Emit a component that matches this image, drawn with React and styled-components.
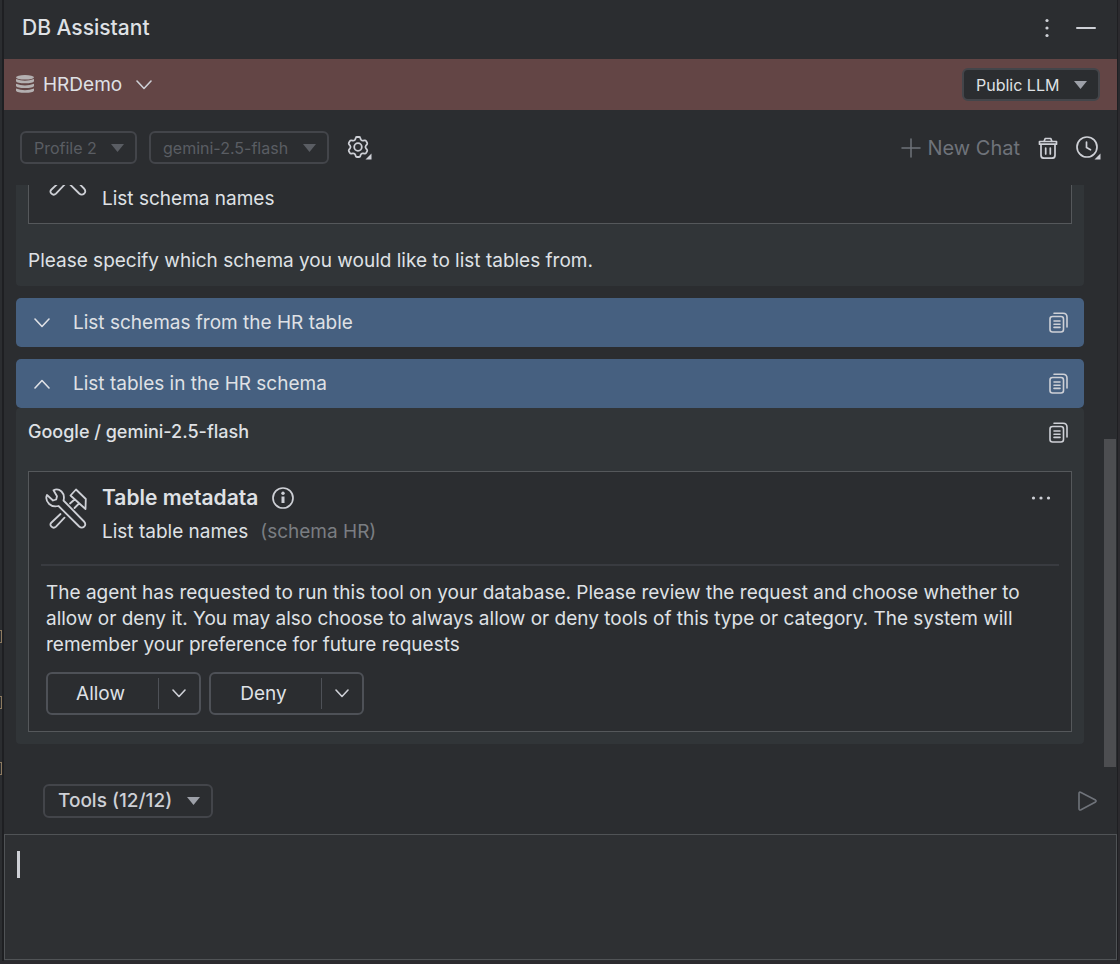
import React, { useState } from 'react';
import styled, { createGlobalStyle, css } from 'styled-components';

const GlobalStyle = createGlobalStyle`
  * {
    box-sizing: border-box;
  }
  body {
    margin: 0;
    background: #1e1f22;
    color: #dfe1e5;
    font-family: Inter, sans-serif;
    font-size: 19px;
    line-height: 26px;
  }
  button, select, textarea {
    font: inherit;
    color: inherit;
  }
`;

const Frame = styled.div`
  display: flex;
  min-height: 100vh;
  border-bottom: 3px solid #2b2a2e;
`;

const EditorEdge = styled.div`
  display: flex;
  flex-direction: column;
  justify-content: flex-end;
  gap: 53px;
  width: 2px;
  margin-right: 2px;
  padding-bottom: 186px;
  background: #2b2d30;
`;

const EdgeMark = styled.i`
  height: 13px;
  border: 1px solid #8c7a60;
  border-left: 0;
`;

const Panel = styled.main`
  display: flex;
  flex-direction: column;
  flex: 1;
  min-width: 0;
  margin-right: 1px;
  background: #2b2d30;
`;

const RightEdge = styled.div`
  width: 2px;
  background: #2b2a2e;
`;

const Row = styled.div`
  display: flex;
  align-items: center;
`;

const TitleBar = styled(Row)`
  justify-content: space-between;
  height: 59px;
  padding: 0 21px 3px 18px;
`;

const PanelTitle = styled.h1`
  margin: 0;
  font-size: 21px;
  font-weight: 500;
`;

const ConnectionBar = styled(Row)`
  justify-content: space-between;
  height: 51px;
  padding: 0 17px 0 12px;
  background: #634545;
`;

const Toolbar = styled(Row)`
  justify-content: space-between;
  height: 75px;
  padding: 0 16px;
`;

const Group = styled(Row)`
  gap: ${props => props.$gap || 12}px;
`;

const IconButton = styled.button`
  display: flex;
  align-items: center;
  gap: 4px;
  padding: 0;
  border: 0;
  background: none;
  color: ${props => props.$muted ? '#6f737a' : '#ced0d6'};
`;

const NewChatButton = styled(IconButton)`
  gap: 6px;
  font-size: 20px;
`;

const SelectBox = styled.label`
  position: relative;
  display: flex;
  align-items: center;

  svg {
    position: absolute;
    right: ${props => props.$plain ? '0' : '13px'};
    color: ${props => props.$disabled ? '#5a5d63' : props.$plain ? '#ced0d6' : '#9da0a8'};
    pointer-events: none;
  }
`;

const SelectField = styled.select`
  appearance: none;
  height: 33px;
  padding: 0 38px 0 12px;
  border: 2px solid #43454a;
  border-radius: 6px;
  background: #2b2d30;
  font-size: 16px;
  line-height: 24px;

  &:disabled {
    color: #5a5d63;
    opacity: 1;
  }
  ${props => props.$strong && css`
    height: 34px;
    padding-left: 13px;
    font-size: 19px;
    font-weight: 500;
    color: #ced0d6;
  `}
  ${props => props.$plain && css`
    padding: 0 29px 0 0;
    border: 0;
    background: none;
    font-size: 19px;
  `}
`;

const ChatView = styled.div`
  display: flex;
  flex: 1;
  min-height: 0;
`;

const ChatList = styled.div`
  display: flex;
  flex-direction: column;
  justify-content: flex-end;
  flex: 1;
  min-width: 0;
  height: 582px;
  padding: 0 20px 23px 12px;
  overflow: hidden;
`;

const ScrollTrack = styled.div`
  display: flex;
  align-items: flex-end;
  width: 12px;
  margin-right: 1px;
`;

const ScrollThumb = styled.div`
  width: 100%;
  height: 328px;
  background: #4d4e51;
`;

const Answer = styled.section`
  padding: 0 12px 12px;
  border-radius: 4px;
  background: #313538;
`;

const AnswerHead = styled(Row)`
  justify-content: space-between;
  height: 63px;
  padding: 0 4px 15px 0;
  font-size: 18px;
  font-weight: 500;
`;

const AnswerText = styled.p`
  margin: 0;
  padding-top: 24px;
`;

const Prompt = styled(Row)`
  justify-content: space-between;
  height: 49px;
  margin-top: 12px;
  padding: 0 16px 0 18px;
  border-radius: 5px;
  background: #466080;
  flex-shrink: 0;
`;

const PromptToggle = styled(IconButton)`
  flex: 1;
  gap: 23px;
  color: #dfe1e5;
`;

const ToolCard = styled.article`
  border: 1px solid #55585b;
  background: #2b2d30;
`;

const ToolHead = styled(Row)`
  align-items: flex-start;
  gap: 15px;
  margin: 0 12px;
  padding: 12px 8px ${props => props.$compact ? '11px' : '19px'} 4px;

  > button, > span {
    margin-top: 4px;
  }
`;

const ToolNames = styled.div`
  flex: 1;
`;

const ToolTitle = styled.h2`
  display: flex;
  align-items: center;
  gap: 14px;
  height: 28px;
  margin: 0 0 7px;
  font-size: 21px;
  font-weight: 600;
`;

const ToolArgs = styled.span`
  margin-left: 12px;
  color: #7a7d82;
`;

const ToolBody = styled.div`
  margin: 0 12px;
  padding: 14px 5px 16px;
  border-top: 2px solid #393b40;

  p {
    margin: 0 0 14px;
  }
`;

const SplitButton = styled.div`
  display: flex;
  align-items: center;
  height: 43px;
  border: 2px solid #4e5157;
  border-radius: 6px;

  button {
    height: 31px;
    border: 0;
    background: none;
  }
`;

const SplitMain = styled.button`
  width: 111px;
  padding: 0 6px 0 0;
`;

const SplitMore = styled.button`
  display: flex;
  align-items: center;
  justify-content: center;
  width: 40px;
  padding: 0;
  box-shadow: -1px 0 #4e5157;
  color: #ced0d6;
`;

const Composer = styled(Row)`
  justify-content: space-between;
  height: 67px;
  padding: 0 20px 0 39px;
`;

const InputWrap = styled.div`
  position: relative;
  display: flex;
  height: 126px;
  margin-bottom: 1px;
`;

const PromptInput = styled.textarea`
  flex: 1;
  padding: 16px;
  border: 1px solid #505356;
  outline: 0;
  resize: none;
  background: #2e3033;
`;

const Caret = styled.span`
  position: absolute;
  top: 17px;
  left: 13px;
  width: 3px;
  height: 27px;
  background: #ced0d6;
`;

const Icon = ({ w = 24, h = w, sw = 2, children }) => (
  <svg width={w} height={h} viewBox={`0 0 ${w} ${h}`} fill="none" stroke="currentColor" strokeWidth={sw} strokeLinecap="round" strokeLinejoin="round" aria-hidden="true">
    {children}
  </svg>
);

const ArrowIcon = () => (
  <Icon w={13} h={8}><path d="M0 0h13L6.500 8z" fill="currentColor" stroke="none" /></Icon>
);

const ChevronIcon = ({ up, w = 16, h = 10 }) => (
  <Icon w={w} h={h} sw={1.6}>
    <path d={up ? `M1 ${h - 1} ${w / 2} 1.500 ${w - 1} ${h - 1}` : `M1 1 ${w / 2} ${h - 1.5} ${w - 1} 1`} />
  </Icon>
);

const DatabaseIcon = () => (
  <Icon w={18} h={20}>
    <g fill="#b4b0b1" stroke="none">
      <ellipse cx="9" cy="2.300" rx="9" ry="2.300" />
      <path d="M0 4q9 3.400 18 0v2.200q-1 2-9 2t-9-2z" />
      <path d="M0 8.700q9 3.400 18 0v2.200q-1 2-9 2t-9-2z" />
      <path d="M0 13.500q9 3.400 18 0v2.200q-1 2-9 2t-9-2z" />
    </g>
  </Icon>
);

const GearIcon = () => (
  <Icon w={25} h={25} sw={1.8}>
    <path transform="translate(0 1)" d="M8.300 3.200 8.800 1.800Q9 1 9.900 1h2.200q.9 0 1.100.8l.5 1.400q.6 1.700 2.500 1.400l1.500-.3q.9-.1 1.300.6l1.100 1.900q.4.800-.1 1.500l-1 1.200q-1.200 1.500 0 3l1 1.200q.5.700.1 1.500l-1.100 1.900q-.4.700-1.300.6l-1.500-.3q-1.900-.3-2.500 1.400l-.5 1.400q-.2.800-1.100.8H9.900q-.9 0-1.100-.8l-.5-1.400q-.6-1.700-2.500-1.400l-1.500.3q-.9.100-1.300-.6l-1.100-1.900q-.4-.8.100-1.500l1-1.200q1.200-1.500 0-3L2 8.300q-.5-.7-.1-1.500L3 4.900q.4-.7 1.300-.6l1.500.3q1.900.3 2.500-1.400z" />
    <circle cx="11" cy="12" r="3.800" />
    <path d="M24.500 18.500v6h-6z" fill="currentColor" stroke="none" />
  </Icon>
);

const TrashIcon = () => (
  <Icon w={20} h={22} sw={1.7}>
    <path d="M1.500 4.500h17v2.700h-17zM6 4.500l1.200-3h5.600l1.200 3M3 7.200v11q0 3 3 3h8q3 0 3-3v-11M7.700 11v6M12.300 11v6" />
  </Icon>
);

const ClockIcon = () => (
  <Icon w={25} h={25} sw={1.7}>
    <circle cx="11" cy="12" r="10" />
    <path d="M10.500 7v5.500l4 2.300" />
    <path d="M24.500 18.500v6h-6z" fill="currentColor" stroke="none" />
  </Icon>
);

const CopyIcon = () => (
  <Icon w={19} h={21} sw={1.6}>
    <rect x="1" y="4.500" width="13.500" height="15.500" rx="2.500" />
    <path d="M5 1.200h9q4 0 4 4V15M5 9h6M5 12.200h6M5 15.400h6" />
  </Icon>
);

const ToolsIcon = () => (
  <Icon w={42} h={42} sw={1.8}>
    <path d="M8.500 2.200Q13 .2 16.500 3.500q3.500 3.500 2 9L39 33.500q2.400 2.500.3 5-2.600 2.300-5.100 0L13.500 18q-5.500 1.500-9.300-2Q-.2 11.500 2 7l6 5.500 3.200-1 .8-3.200z" />
    <path d="M15.500 26 6.500 34.500q-2.200 2 0 4.200 2.200 2.200 4.500 0l8.500-9" />
    <path d="M31 1.500 40.800 11l-.3 10L25.500 7.500zM29.500 11.500l-4.500 4M34 15.500l-4.500 4.500" />
  </Icon>
);

const InfoIcon = () => (
  <Icon w={22} h={22} sw={1.7}>
    <circle cx="11" cy="11" r="10" />
    <circle cx="11" cy="6.200" r="1.700" fill="currentColor" stroke="none" />
    <path d="M11 9.500v6.500" strokeWidth="3" strokeLinecap="butt" />
  </Icon>
);

const DotsIcon = ({ vertical }) => (
  <Icon w={20} h={20}>
    {[2.5, 10, 17.5].map(p => (
      <circle key={p} cx={vertical ? 10 : p} cy={vertical ? p : 10} r="1.600" fill="currentColor" stroke="none" />
    ))}
  </Icon>
);

const Dropdown = ({ label, value, disabled, plain, strong }) => (
  <SelectBox $disabled={disabled} $plain={plain}>
    <SelectField aria-label={label} disabled={disabled} $plain={plain} $strong={strong}>
      <option>{value}</option>
    </SelectField>
    {plain ? <ChevronIcon /> : <ArrowIcon />}
  </SelectBox>
);

const CopyButton = () => (
  <IconButton aria-label="Copy"><CopyIcon /></IconButton>
);

const PromptRow = ({ text, open }) => (
  <Prompt>
    <PromptToggle aria-expanded={!!open}>
      <ChevronIcon up={open} />
      {text}
    </PromptToggle>
    <CopyButton />
  </Prompt>
);

const Split = ({ text }) => (
  <SplitButton>
    <SplitMain>{text}</SplitMain>
    <SplitMore aria-label={text + ' options'}><ChevronIcon w={14} h={9} /></SplitMore>
  </SplitButton>
);

const ToolHeader = ({ title, name, args }) => (
  <ToolHead $compact={!title}>
    <IconButton as="span"><ToolsIcon /></IconButton>
    <ToolNames>
      <ToolTitle>{title}{title && <IconButton aria-label="Tool info"><InfoIcon /></IconButton>}</ToolTitle>
      {name}
      {args && <ToolArgs>({args})</ToolArgs>}
    </ToolNames>
    {title && <IconButton aria-label="More"><DotsIcon /></IconButton>}
  </ToolHead>
);

function App() {
  const [message, setMessage] = useState('');

  return (
    <Frame>
      <GlobalStyle />
      <EditorEdge><EdgeMark /><EdgeMark /><EdgeMark /></EditorEdge>
      <Panel>
        <TitleBar>
          <PanelTitle>DB Assistant</PanelTitle>
          <Group $gap={19}>
            <IconButton aria-label="Options"><DotsIcon vertical /></IconButton>
            <IconButton aria-label="Hide"><Icon w={20} h={20}><path d="M1 10h18" /></Icon></IconButton>
          </Group>
        </TitleBar>

        <ConnectionBar>
          <Group $gap={9}>
            <DatabaseIcon />
            <Dropdown plain label="Connection" value="HRDemo" />
          </Group>
          <Dropdown label="Model access" value="Public LLM" />
        </ConnectionBar>

        <Toolbar>
          <Group $gap={18}>
            <Group>
              <Dropdown disabled label="Profile" value="Profile 2" />
              <Dropdown disabled label="Model" value="gemini-2.5-flash" />
            </Group>
            <IconButton aria-label="Settings"><GearIcon /></IconButton>
          </Group>
          <Group $gap={18}>
            <NewChatButton $muted>
              <Icon w={20} h={20} sw={1.5}><path d="M1 10h18M10 1v18" /></Icon>
              New Chat
            </NewChatButton>
            <IconButton aria-label="Delete chat"><TrashIcon /></IconButton>
            <IconButton aria-label="History"><ClockIcon /></IconButton>
          </Group>
        </Toolbar>

        <ChatView>
          <ChatList>
            <Answer>
              <ToolCard>
                <ToolHeader name="List schema names" />
              </ToolCard>
              <AnswerText>Please specify which schema you would like to list tables from.</AnswerText>
            </Answer>
            <PromptRow text="List schemas from the HR table" />
            <PromptRow open text="List tables in the HR schema" />
            <Answer>
              <AnswerHead>
                Google / gemini-2.5-flash
                <CopyButton />
              </AnswerHead>
              <ToolCard>
                <ToolHeader title="Table metadata" name="List table names" args="schema HR" />
                <ToolBody>
                  <p>
                    The agent has requested to run this tool on your database. Please review the request and
                    choose whether to allow or deny it. You may also choose to always allow or deny tools of
                    this type or category. The system will remember your preference for future requests
                  </p>
                  <Group $gap={8}>
                    <Split text="Allow" />
                    <Split text="Deny" />
                  </Group>
                </ToolBody>
              </ToolCard>
            </Answer>
          </ChatList>
          <ScrollTrack><ScrollThumb /></ScrollTrack>
        </ChatView>

        <Composer>
          <Dropdown strong label="Tools" value="Tools (12/12)" />
          <IconButton $muted aria-label="Send" disabled>
            <Icon w={19} h={20} sw={1.6}><path d="M1 2.500Q1 .500 3 1.500L17.500 9q1.200 1 0 2L3 18.800Q1 19.500 1 17.500z" /></Icon>
          </IconButton>
        </Composer>
        <InputWrap>
          <PromptInput aria-label="Message" value={message} onChange={e => setMessage(e.target.value)} />
          <Caret />
        </InputWrap>
      </Panel>
      <RightEdge />
    </Frame>
  );
}

export default App;
